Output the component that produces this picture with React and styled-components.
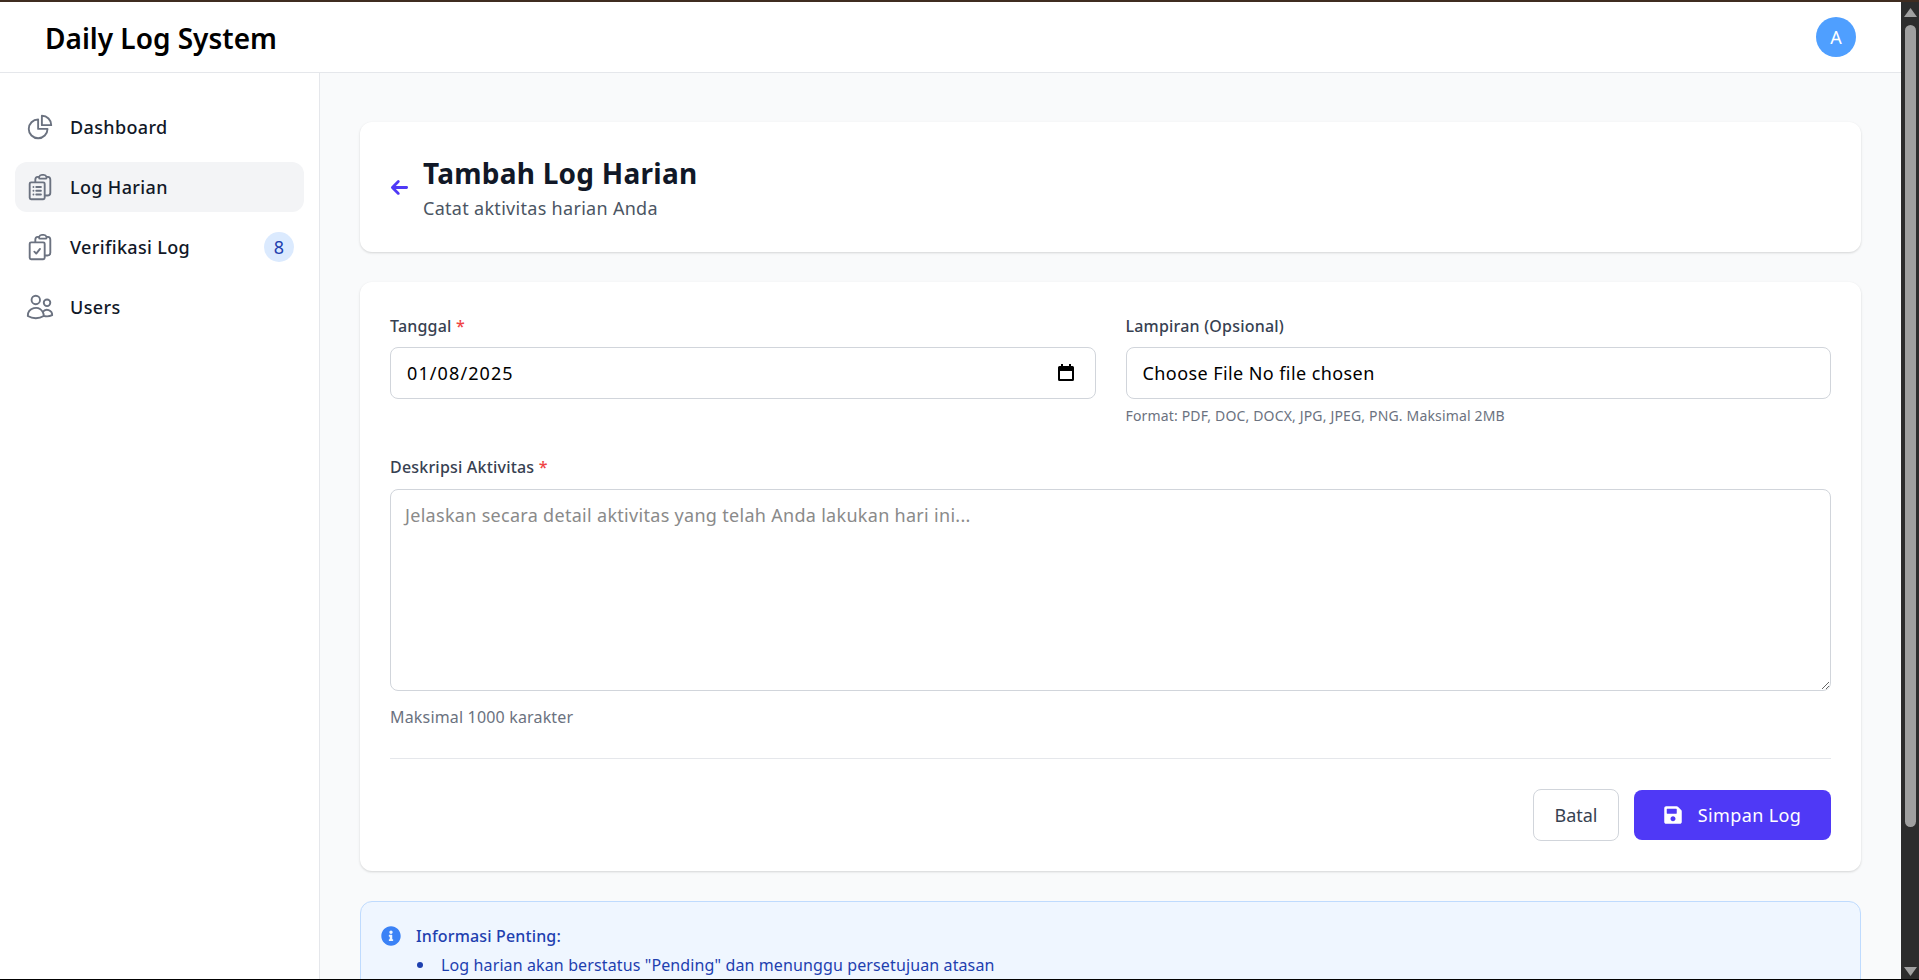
import styled, { createGlobalStyle } from "styled-components"
import {
    HiOutlineChartPie,
    HiOutlineClipboardDocumentList,
    HiOutlineClipboardDocumentCheck,
    HiOutlineUsers,
    HiArrowLeft,
} from "react-icons/hi2"
import { FaSave, FaInfoCircle } from "react-icons/fa"

const GlobalStyle = createGlobalStyle`
    html, body {
        margin: 0;
        height: 100%;
        overflow: hidden;
    }
    * {
        box-sizing: border-box;
    }
    body {
        font-family: "Noto Sans", "Open Sans", sans-serif;
        color: #111827;
    }
`

const Frame = styled.div`
    display: flex;
    flex-direction: column;
    height: 980px;
    background: #2b2b2b;
`
const TopEdge = styled.div`
    height: 2px;
    flex: none;
    background: #3f2c20;
`
const BottomEdge = styled.div`
    height: 1px;
    flex: none;
    background: #000;
`
const Window = styled.div`
    flex: 1;
    min-height: 0;
    display: flex;
`
const Page = styled.div`
    flex: 1;
    min-width: 0;
    overflow: hidden;
    background: #f9fafb;
`
const ScrollRail = styled.div`
    flex: none;
    width: 18px;
    display: flex;
    flex-direction: column;
    align-items: center;
    padding: 6px 0 3px;
    background: #2c2c2c;
`
const ScrollThumb = styled.div`
    width: 11px;
    height: 802px;
    margin: 8px 0 auto;
    border-radius: 6px;
    background: #9f9f9f;
`
const Header = styled.header`
    display: flex;
    align-items: center;
    justify-content: space-between;
    height: 71px;
    padding: 0 45px;
    background: #fff;
    border-bottom: 1px solid #e5e7eb;
`
const Brand = styled.div`
    padding-top: 2px;
    font-size: 28px;
    font-weight: 600;
    color: #000;
`
const Avatar = styled.div`
    display: flex;
    align-items: center;
    justify-content: center;
    width: 40px;
    height: 40px;
    border-radius: 50%;
    background: #4f9fff;
    color: #fff;
    font-size: 18px;
`
const Body = styled.div`
    display: flex;
    align-items: stretch;
`
const Sidebar = styled.aside`
    flex: none;
    width: 320px;
    padding: 29px 15px;
    background: #fff;
    border-right: 1px solid #e5e7eb;
`
const Nav = styled.nav`
    display: flex;
    flex-direction: column;
    gap: 10px;
`
const NavItem = styled.a`
    display: flex;
    align-items: center;
    height: 50px;
    padding: 0 10px 0 10px;
    border-radius: 12px;
    font-size: 18px;
    font-weight: 500;
    letter-spacing: 0.35px;
    color: #111827;
    background: ${(p) => (p.$active ? "#f3f4f6" : "transparent")};

    & svg {
        width: 30px;
        height: 30px;
        margin-right: 15px;
        color: #6b7280;
        flex: none;
    }
`
const Badge = styled.span`
    display: flex;
    align-items: center;
    justify-content: center;
    width: 30px;
    height: 30px;
    margin-left: auto;
    border-radius: 50%;
    background: #dbeafe;
    color: #1e40af;
    font-size: 18px;
    font-weight: 400;
`
const Main = styled.main`
    flex: 1;
    min-width: 0;
    display: flex;
    flex-direction: column;
    gap: 30px;
    padding: 49px 40px 40px;
`
const Card = styled.section`
    padding: 30px;
    background: #fff;
    border-radius: 12px;
    box-shadow: 0 1px 3px rgba(0, 0, 0, 0.1), 0 1px 2px rgba(0, 0, 0, 0.06);
`
const TitleCard = styled(Card)`
    display: flex;
    align-items: center;
    height: 130px;
`
const BackLink = styled.a`
    display: flex;
    margin-right: 14px;
    color: #4f39f6;
    & svg {
        width: 19px;
        height: 19px;
        stroke-width: 2;
    }
`
const Title = styled.h1`
    margin: 0;
    font-size: 28px;
    line-height: 38px;
    font-weight: 700;
    letter-spacing: 0.25px;
    color: #111827;
`
const Subtitle = styled.p`
    margin: 3px 0 0;
    font-size: 18px;
    line-height: 26px;
    letter-spacing: 0.3px;
    color: #4b5563;
`
const FormGrid = styled.div`
    display: grid;
    grid-template-columns: 1fr 1fr;
    gap: 30px;
    margin-bottom: 28px;
`
const Label = styled.label`
    display: block;
    height: 35px;
    padding-top: 2px;
    font-size: 16px;
    line-height: 24px;
    font-weight: 500;
    letter-spacing: 0.2px;
    color: #374151;
`
const Required = styled.span`
    color: #ef4444;
`
const FieldBox = styled.div`
    display: flex;
    align-items: center;
    justify-content: space-between;
    height: 52px;
    padding: 0 19px 0 16px;
    background: #fff;
    border: 1px solid #d1d5db;
    border-radius: 8px;
    font-size: 18px;
    letter-spacing: ${(p) => p.$spacing || "0.42px"};
    color: #000;
`
const SmallHint = styled.p`
    margin: 8px 0 0;
    font-size: 14px;
    line-height: 18px;
    letter-spacing: 0.16px;
    color: #6b7280;
`
const TextArea = styled.textarea`
    display: block;
    width: 100%;
    height: 202px;
    margin-top: 1px;
    padding: 12px 14px;
    background: #fff;
    border: 1px solid #d1d5db;
    border-radius: 8px;
    font-family: inherit;
    font-size: 18px;
    line-height: 26px;
    letter-spacing: 0.3px;
    outline: none;
    &::placeholder {
        color: #8a8a8a;
    }
`
const Hint = styled.p`
    margin: 14px 0 0;
    font-size: 16px;
    line-height: 24px;
    letter-spacing: 0.17px;
    color: #6b7280;
`
const Footer = styled.div`
    display: flex;
    justify-content: flex-end;
    align-items: center;
    gap: 15px;
    margin-top: 29px;
    padding-top: 30px;
    border-top: 1px solid #e5e7eb;
`
const Button = styled.button`
    display: flex;
    align-items: center;
    justify-content: center;
    font-family: inherit;
    font-size: 18px;
    border-radius: 8px;
`
const CancelButton = styled(Button)`
    width: 86px;
    height: 52px;
    background: #fff;
    border: 1px solid #d1d5db;
    color: #374151;
`
const SaveButton = styled(Button)`
    width: 197px;
    height: 50px;
    gap: 16px;
    letter-spacing: 0.37px;
    background: #4f39f6;
    border: none;
    color: #fff;
    & svg {
        width: 18px;
        height: 20px;
    }
`
const InfoBox = styled.section`
    padding: 22px 20px 28px;
    background: #eff6ff;
    border: 1px solid #bfdbfe;
    border-radius: 12px;
    color: #1e40af;
`
const InfoHead = styled.div`
    display: flex;
    align-items: center;
    gap: 15px;
    font-size: 16px;
    line-height: 24px;
    font-weight: 500;
    letter-spacing: 0.15px;
    & svg {
        width: 20px;
        height: 20px;
        color: #3b82f6;
    }
`
const InfoList = styled.ul`
    margin: 2px 0 0;
    padding: 0 0 0 36px;
    list-style: none;
    font-size: 16px;
    line-height: 30px;
    letter-spacing: 0.12px;
`
const InfoItem = styled.li`
    display: flex;
    align-items: center;
    gap: 18px;
    &::before {
        content: "";
        width: 6px;
        height: 6px;
        border-radius: 50%;
        background: #1e40af;
    }
`

const CalendarIcon = () => (
    <svg width="20" height="20" viewBox="0 0 20 20">
        <path
            d="M5 1h2v2h6V1h2v2h1.500A1.500 1.500 0 0 1 18 4.500v12a1.500 1.500 0 0 1-1.500 1.500h-13A1.500 1.500 0 0 1 2 16.500v-12A1.500 1.500 0 0 1 3.500 3H5zM4 8v8h12V8z"
            fill="#000"
        />
    </svg>
)

const ScrollArrow = ({ down }) => (
    <svg width="13" height="9" viewBox="0 0 13 9">
        <path d={down ? "M0 0h13L6.500 9z" : "M6.500 0L13 9H0z"} fill="#a0a0a0" />
    </svg>
)

const NavLink = ({ icon: Icon, label, active, badge }) => (
    <NavItem $active={active}>
        <Icon />
        {label}
        {badge && <Badge>{badge}</Badge>}
    </NavItem>
)

export default function App() {
    return (
        <Frame>
            <GlobalStyle />
            <TopEdge />
            <Window>
                <Page>
                    <Header>
                        <Brand>Daily Log System</Brand>
                        <Avatar>A</Avatar>
                    </Header>
                    <Body>
                        <Sidebar>
                            <Nav>
                                <NavLink icon={HiOutlineChartPie} label="Dashboard" />
                                <NavLink icon={HiOutlineClipboardDocumentList} label="Log Harian" active />
                                <NavLink icon={HiOutlineClipboardDocumentCheck} label="Verifikasi Log" badge="8" />
                                <NavLink icon={HiOutlineUsers} label="Users" />
                            </Nav>
                        </Sidebar>
                        <Main>
                            <TitleCard>
                                <BackLink><HiArrowLeft /></BackLink>
                                <div>
                                    <Title>Tambah Log Harian</Title>
                                    <Subtitle>Catat aktivitas harian Anda</Subtitle>
                                </div>
                            </TitleCard>
                            <Card>
                                <FormGrid>
                                    <div>
                                        <Label>Tanggal <Required>*</Required></Label>
                                        <FieldBox $spacing="1.1px">
                                            01/08/2025
                                            <CalendarIcon />
                                        </FieldBox>
                                    </div>
                                    <div>
                                        <Label>Lampiran (Opsional)</Label>
                                        <FieldBox>Choose File No file chosen</FieldBox>
                                        <SmallHint>Format: PDF, DOC, DOCX, JPG, JPEG, PNG. Maksimal 2MB</SmallHint>
                                    </div>
                                </FormGrid>
                                <Label>Deskripsi Aktivitas <Required>*</Required></Label>
                                <TextArea placeholder="Jelaskan secara detail aktivitas yang telah Anda lakukan hari ini..." />
                                <Hint>Maksimal 1000 karakter</Hint>
                                <Footer>
                                    <CancelButton>Batal</CancelButton>
                                    <SaveButton><FaSave />Simpan Log</SaveButton>
                                </Footer>
                            </Card>
                            <InfoBox>
                                <InfoHead><FaInfoCircle />Informasi Penting:</InfoHead>
                                <InfoList>
                                    <InfoItem>Log harian akan berstatus "Pending" dan menunggu persetujuan atasan</InfoItem>
                                </InfoList>
                            </InfoBox>
                        </Main>
                    </Body>
                </Page>
                <ScrollRail>
                    <ScrollArrow />
                    <ScrollThumb />
                    <ScrollArrow down />
                </ScrollRail>
            </Window>
            <BottomEdge />
        </Frame>
    )
}
